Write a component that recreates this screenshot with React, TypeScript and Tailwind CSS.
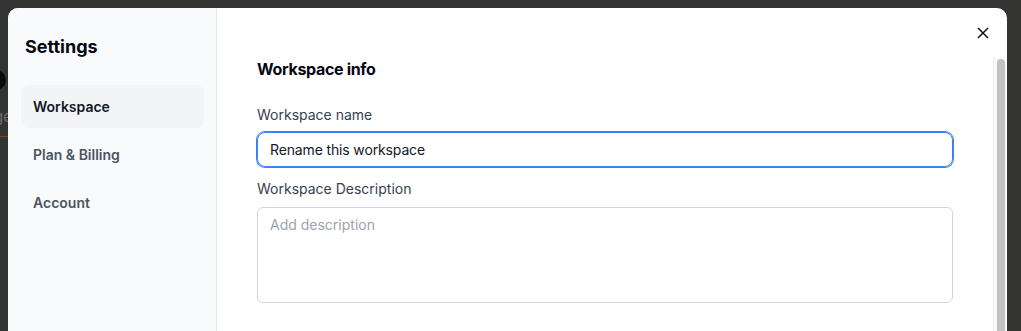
import { useState } from 'react';

const NAV = ['Workspace', 'Plan & Billing', 'Account'];

function CloseIcon() {
  return (
    <svg width="12" height="12" viewBox="0 0 12 12" fill="none" stroke="#111" strokeWidth="1.5" strokeLinecap="square">
      <path d="M1.5 1.5 L10.5 10.5 M10.5 1.5 L1.5 10.5" />
    </svg>
  );
}

export default function App() {
  const [active, setActive] = useState('Workspace');
  const [name, setName] = useState('Rename this workspace');
  const [desc, setDesc] = useState('');

  return (
    <div className="relative h-[331px] w-full overflow-hidden bg-[#333331] font-['Inter',sans-serif]">
      {/* dimmed page behind the modal */}
      <div className="absolute left-[-14px] top-[70px] h-5 w-5 rounded-full bg-[#0b0b0b]" />
      <div className="absolute left-[-6px] top-[106px] text-[15px] text-[#6b6b6b]">ge</div>
      <div className="absolute left-0 top-[136px] h-px w-2 bg-[#7a4526]" />

      {/* Settings modal */}
      <div className="absolute left-2 top-2 flex h-[340px] w-[999px] overflow-hidden rounded-t-[10px] bg-white">
        <aside className="flex w-[209px] shrink-0 flex-col border-r border-[#e5e7eb] bg-[#f9fafb] pl-[13px] pr-3 pt-[25px]">
          <h2 className="m-0 px-1 text-[18px] font-bold leading-7 text-[#030712]">Settings</h2>
          <nav className="mt-[24px] flex flex-col gap-[5px]">
            {NAV.map((item) => {
              const on = item === active;
              return (
                <button
                  key={item}
                  onClick={() => setActive(item)}
                  className={`flex h-[43px] items-center rounded-lg px-3 text-left text-[14px] font-semibold ${
                    on ? 'bg-[#f3f4f6] text-[#111827]' : 'text-[#4b5563]'
                  }`}
                >
                  {item}
                </button>
              );
            })}
          </nav>
        </aside>

        <div className="flex flex-1 flex-col">
          <div className="flex h-[49px] shrink-0 justify-end pr-[18px] pt-[19px]">
            <button className="flex h-3 w-3 items-center justify-center" aria-label="Close">
              <CloseIcon />
            </button>
          </div>
          <div className="flex flex-1">
            <div className="flex-1 px-10">
              <h3 className="m-0 text-[16px] font-bold leading-6 tracking-[-0.02em] text-[#030712]">Workspace info</h3>
              <label className="mt-6 block text-[14px] leading-5 text-[#374151]">Workspace name</label>
              <input
                value={name}
                onChange={(e) => setName(e.target.value)}
                className="mt-[7px] block h-[35px] w-full rounded-lg border border-[#3b82f6] px-3 text-[14px] tracking-[-0.01em] text-[#111827] outline-none ring-1 ring-[#3b82f6]"
              />
              <label className="mt-3 block text-[14px] leading-5 text-[#374151]">Workspace Description</label>
              <textarea
                value={desc}
                onChange={(e) => setDesc(e.target.value)}
                placeholder="Add description"
                className="mt-2 block h-[96px] w-full resize-none rounded-md border border-[#d1d5db] px-3 py-[7px] text-[14px] leading-5 text-[#111827] outline-none placeholder:text-[#9ca3af]"
              />
            </div>
            {/* scrollbar */}
            <div className="w-[14px] shrink-0 border-l border-[#ececec] bg-[#fafafa] pt-[2px]">
              <div className="mx-auto h-[400px] w-2 rounded-full bg-[#c1c1c1]" />
            </div>
          </div>
        </div>
      </div>
    </div>
  );
}
